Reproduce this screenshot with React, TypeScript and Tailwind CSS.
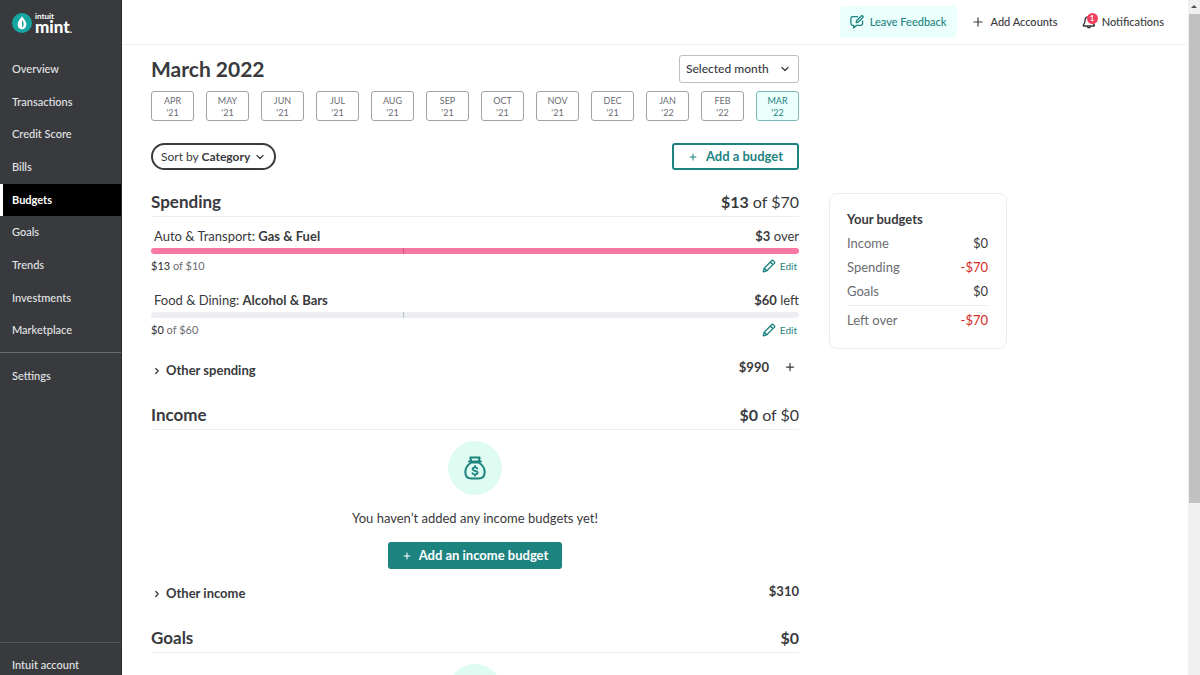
import React from 'react';
import { ChevronDown, ChevronRight, Plus } from 'lucide-react';

const navItems = ['Overview', 'Transactions', 'Credit Score', 'Bills', 'Budgets', 'Goals', 'Trends', 'Investments', 'Marketplace'];

const months = [
  { name: 'APR', year: "'21" },
  { name: 'MAY', year: "'21" },
  { name: 'JUN', year: "'21" },
  { name: 'JUL', year: "'21" },
  { name: 'AUG', year: "'21" },
  { name: 'SEP', year: "'21" },
  { name: 'OCT', year: "'21" },
  { name: 'NOV', year: "'21" },
  { name: 'DEC', year: "'21" },
  { name: 'JAN', year: "'22" },
  { name: 'FEB', year: "'22" },
  { name: 'MAR', year: "'22" },
];

const PencilIcon: React.FC = () => (
  <svg className="h-[14px] w-[14px]" viewBox="0 0 14 14" fill="none" stroke="currentColor" strokeWidth="1.3" strokeLinejoin="round">
    <path d="M1.2 12.8 2.2 9.2 9.6 1.7a1.3 1.3 0 0 1 1.8 0l.9.9a1.3 1.3 0 0 1 0 1.8L4.8 11.8zM8.3 3l2.7 2.7M2.3 9.3l2.4 2.4" />
  </svg>
);

const FeedbackIcon: React.FC = () => (
  <svg className="h-[14px] w-[14px]" viewBox="0 0 14 14" fill="none" stroke="currentColor" strokeWidth="1.3" strokeLinecap="round" strokeLinejoin="round">
    <path d="M7.5 1.7H2.6A1.7 1.7 0 0 0 .9 3.4v5.2a1.7 1.7 0 0 0 1.7 1.7h1.1v2.6l2.9-2.6h4.3a1.7 1.7 0 0 0 1.7-1.7V6.2" />
    <path d="M6.2 7.7l.4-2L11.2 1a1 1 0 0 1 1.4 0l.2.2a1 1 0 0 1 0 1.4L8.1 7.2z" />
  </svg>
);

const BellIcon: React.FC = () => (
  <svg className="h-[14px] w-[14px]" viewBox="0 0 14 14" fill="none" stroke="currentColor" strokeWidth="1.4" strokeLinecap="round" strokeLinejoin="round">
    <path d="M6.6 1.6A3.9 3.9 0 0 0 3 5.5c0 2.5-.5 3.3-1.6 4.4-.4.5-.1 1.1.4 1.1h10c.5 0 .8-.6.4-1.1-.9-.9-1.4-1.7-1.5-3.4" />
    <path d="M5.3 11.6a1.7 1.7 0 0 0 3.2 0" />
  </svg>
);

const MoneyBag: React.FC = () => (
  <div className="mx-auto flex h-[54px] w-[54px] shrink-0 items-center justify-center rounded-full bg-[#dffcf3] text-[#1d837f]">
    <svg className="h-6 w-[22px]" viewBox="0 0 22 24" fill="none" stroke="currentColor" strokeWidth="2" strokeLinecap="round" strokeLinejoin="round">
      <path d="M7 5 6.400 1.500h9.200L15 5M5 5.500h12" />
      <path d="M7.500 6.500C4 8.500 1.300 12 1.300 16c0 4.500 2.500 6.500 6.200 6.500h7c3.700 0 6.200-2 6.200-6.500 0-4-2.700-7.500-6.200-9.500z" />
      <path d="M13.3 12.500c-.6-.8-1.300-1.100-2.300-1.100-1.400 0-2.400.7-2.400 1.700 0 2.400 5 1 5 3.500 0 1.100-1.100 1.800-2.600 1.800-1.100 0-2-.4-2.600-1.200M11 10v1.400M11 18.400v1.400" strokeWidth="1.800" />
    </svg>
  </div>
);

const Sidebar: React.FC = () => (
  <aside className="flex h-screen w-[122px] shrink-0 flex-col border-r border-[#2b2c2f] bg-[#393a3d] text-[11px] font-medium text-[#e3e5e8]">
    <a href="#home" aria-label="Intuit Mint" className="flex h-[53px] shrink-0 items-start gap-[3px] pt-[13px] pl-3 text-white">
      <svg className="h-5 w-5" viewBox="0 0 20 20">
        <circle cx="10" cy="10" r="10" fill="#14a6a0" />
        <path d="M10 3.2C7.8 6.3 5.6 8.7 5.6 11.600a4.400 4.700 0 0 0 8.800 0C14.400 8.700 12.200 6.300 10 3.200z" fill="#fff" />
        <path d="M10 6.700c1.500 2.300 1.900 3.500 1.600 5.300-.2 1.200-.8 2-1.600 2.500z" fill="#14a6a0" />
      </svg>
      <span className="flex flex-col">
        <span className="text-[8px] leading-[7px] font-bold">intuit</span>
        <span className="text-[17px] leading-[13px] font-black">
          mint<span className="text-[9px]">.</span>
        </span>
      </span>
    </a>
    <nav className="flex h-[294px] shrink-0 flex-col">
      {navItems.map((item) => (
        <a
          key={item}
          href={`#${item}`}
          className={
            item === 'Budgets'
              ? 'flex flex-1 items-center border-l-3 border-white bg-black pl-[9px] font-bold text-white'
              : 'flex flex-1 items-center pl-3'
          }
        >
          {item}
        </a>
      ))}
    </nav>
    <div className="mt-[5px] border-t border-[#6b6c72] pt-[7px]">
      <a href="#settings" className="flex h-8 items-center pl-3">Settings</a>
    </div>
    <div className="mt-auto border-t border-[#55565b] pt-[6px]">
      <a href="#account" className="flex h-[26px] items-center pt-[6px] pl-3">Intuit account</a>
    </div>
  </aside>
);

const TopBar: React.FC = () => (
  <header className="flex h-[45px] shrink-0 items-center justify-end border-b border-[#f0f1f3] pr-6 text-[11px] font-medium">
    <button className="flex h-8 items-center gap-[6px] rounded-sm bg-[#ebfffd] px-[10px] text-[#1d837f]">
      <FeedbackIcon /> Leave Feedback
    </button>
    <button className="ml-[14px] flex items-center gap-[6px]">
      <Plus className="h-[14px] w-[14px]" strokeWidth={2} /> Add Accounts
    </button>
    <button className="ml-6 flex items-center gap-[6px]">
      <span className="relative">
        <BellIcon />
        <span className="absolute -top-[2px] left-[5px] flex h-[11px] w-[11px] items-center justify-center rounded-full bg-[#f2415f] text-[7px] leading-none font-bold text-white">1</span>
      </span>
      Notifications
    </button>
  </header>
);

interface SectionHeadProps {
  title: string;
  amount: string;
  total?: string;
}

const SectionHead: React.FC<SectionHeadProps> = ({ title, amount, total }) => (
  <div className="flex h-[29px] items-center justify-between border-b border-[#eceef1] text-[16px]">
    <h2 className="text-[17px] font-bold">{title}</h2>
    <p>
      <b>{amount}</b>{total && ` of ${total}`}
    </p>
  </div>
);

interface BudgetRowProps {
  group: string;
  name: string;
  left: string;
  leftLabel: string;
  spent: string;
  limit: string;
  over?: boolean;
}

const BudgetRow: React.FC<BudgetRowProps> = ({ group, name, left, leftLabel, spent, limit, over }) => (
  <div className="h-16">
    <div className="flex h-[23px] items-center justify-between text-[13px]">
      <p className="pl-[3px]">{group}: <b>{name}</b></p>
      <p><b>{left}</b> {leftLabel}</p>
    </div>
    <div className={over ? 'h-[6px] rounded-full bg-[#f978a3]' : 'h-[6px] rounded-full bg-[#eceef1]'}>
      <div className={over ? 'h-full w-[39%] border-r border-[#c95c82]' : 'h-full w-[39%] border-r border-[#babec5]'} />
    </div>
    <div className="flex h-6 items-center justify-between text-[11px] text-[#6b6c72]">
      <p><span className="font-medium text-[#393a3d]">{spent}</span> of {limit}</p>
      <button className="flex items-center gap-1 pr-[2px] text-[10px] text-[#1d837f]">
        <PencilIcon /> Edit
      </button>
    </div>
  </div>
);

const SummaryCard: React.FC = () => {
  const rows = [
    { label: 'Income', value: '$0' },
    { label: 'Spending', value: '-$70' },
    { label: 'Goals', value: '$0' },
  ];

  return (
    <aside className="mt-[148px] w-[178px] shrink-0 rounded-lg border border-[#eceef1] pt-[14px] pr-[18px] pb-[13px] pl-[17px] text-[13px]">
      <h3 className="flex h-6 items-center font-bold">Your budgets</h3>
      {rows.map((row) => (
        <div key={row.label} className="flex h-6 items-center justify-between">
          <span className="text-[#6b6c72]">{row.label}</span>
          <span className={row.value.startsWith('-') ? 'text-[#d52b1e]' : ''}>{row.value}</span>
        </div>
      ))}
      <div className="mt-px flex h-[30px] items-center justify-between border-t border-[#eceef1]">
        <span className="text-[#6b6c72]">Left over</span>
        <span className="text-[#d52b1e]">-$70</span>
      </div>
    </aside>
  );
};

const App: React.FC = () => {
  return (
    <div className="flex h-screen overflow-hidden bg-white font-['Lato','Open_Sans',sans-serif] text-[#393a3d]">
      <Sidebar />
      <div className="flex min-w-0 flex-1 flex-col overflow-hidden">
        <TopBar />
        <div className="flex min-h-0 flex-1 items-start gap-[30px] overflow-hidden pr-6 pl-[29px]">
          <main className="min-w-0 max-w-[648px] flex-1 pt-[10px]">
            <div className="flex h-7 items-center justify-between">
              <h1 className="text-[21px] leading-6 font-bold">March 2022</h1>
              <div className="relative flex items-center">
                <select
                  aria-label="Month range"
                  className="h-7 w-[120px] appearance-none rounded-[3px] border border-[#babec5] bg-white pl-[6px] text-[12px] font-medium"
                >
                  <option>Selected month</option>
                </select>
                <ChevronDown className="pointer-events-none absolute right-2 h-3 w-3" strokeWidth={2.5} />
              </div>
            </div>

            <div className="mt-2 grid grid-cols-12 gap-3">
              {months.map((month) => (
                <button
                  key={month.name}
                  className={
                    month.name === 'MAR'
                      ? 'flex h-[30px] flex-col items-center justify-center rounded-[3px] border border-[#7fb9b6] bg-[#ebfffd] pt-[2px] text-[9px] leading-3 text-[#1d837f]'
                      : 'flex h-[30px] flex-col items-center justify-center rounded-[3px] border border-[#a0a2a8] pt-[2px] text-[9px] leading-3 text-[#6b6c72]'
                  }
                >
                  <span>{month.name}</span>
                  <span>{month.year}</span>
                </button>
              ))}
            </div>

            <div className="mt-[22px] flex items-center justify-between">
              <button className="flex h-[27px] items-center rounded-full border-2 border-[#393a3d] px-2 text-[12px]">
                Sort by&nbsp;<span className="font-bold">Category</span>
                <ChevronDown className="ml-1 h-3 w-3" strokeWidth={2.5} />
              </button>
              <button className="flex h-[27px] items-center gap-2 rounded-[3px] border-2 border-[#1d837f] px-[14px] text-[13px] font-bold text-[#1d837f]">
                <Plus className="h-[10px] w-[10px]" strokeWidth={2.5} /> Add a budget
              </button>
            </div>

            <section className="mt-[18px]">
              <SectionHead title="Spending" amount="$13" total="$70" />
              <div className="pt-2">
                <BudgetRow group="Auto & Transport" name="Gas & Fuel" left="$3" leftLabel="over" spent="$13" limit="$10" over />
                <BudgetRow group="Food & Dining" name="Alcohol & Bars" left="$60" leftLabel="left" spent="$0" limit="$60" />
              </div>
              <div className="mt-[6px] flex h-6 items-start justify-between text-[13px] font-bold">
                <button className="flex h-6 items-center gap-1 pl-px">
                  <ChevronRight className="h-[10px] w-[10px]" strokeWidth={3} /> Other spending
                </button>
                <div className="flex items-center gap-[15px] pr-[3px] leading-4">
                  <span>$990</span>
                  <button aria-label="Add budget for other spending">
                    <Plus className="h-3 w-3" strokeWidth={2.5} />
                  </button>
                </div>
              </div>
            </section>

            <section className="mt-[18px]">
              <SectionHead title="Income" amount="$0" total="$0" />
              <div className="flex flex-col items-center pt-[11px]">
                <MoneyBag />
                <p className="mt-[13px] text-[13px] leading-5">You haven’t added any income budgets yet!</p>
                <button className="mt-[14px] flex h-[27px] items-center gap-[7px] rounded-[3px] bg-[#1d837f] px-[14px] text-[13px] font-bold text-white">
                  <Plus className="h-[10px] w-[10px]" strokeWidth={2.5} /> Add an income budget
                </button>
              </div>
              <div className="mt-[13px] flex h-6 items-start justify-between text-[13px] font-bold">
                <button className="flex h-6 items-center gap-1 pl-px">
                  <ChevronRight className="h-[10px] w-[10px]" strokeWidth={3} /> Other income
                </button>
                <span>$310</span>
              </div>
            </section>

            <section className="mt-[18px]">
              <SectionHead title="Goals" amount="$0" />
              <div className="pt-[11px]">
                <MoneyBag />
              </div>
            </section>
          </main>
          <SummaryCard />
        </div>
      </div>

      {/* Page scrollbar */}
      <div className="flex h-full w-3 shrink-0 flex-col items-center bg-[#f0f0f0]" aria-hidden="true">
        <svg className="h-[14px] w-3 shrink-0" viewBox="0 0 12 14">
          <path d="M3 8 6 5l3 3z" fill="#505050" />
        </svg>
        <div className="h-[489px] w-[11px] bg-[#c1c1c1]" />
      </div>
    </div>
  );
};

export default App;
